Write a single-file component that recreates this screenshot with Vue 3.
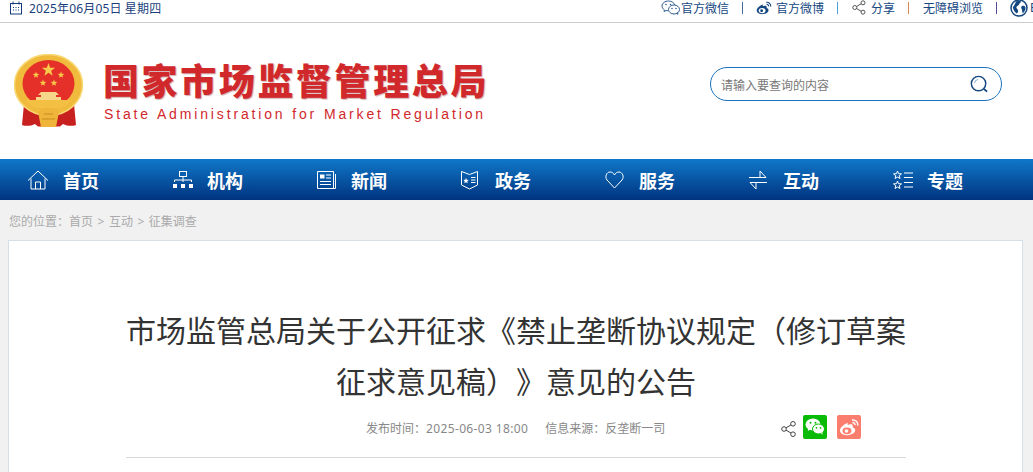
<script setup>
const topLinks = [
  { name: 'wechat', label: '官方微信' },
  { name: 'weibo', label: '官方微博' },
  { name: 'share', label: '分享' },
  { name: 'none', label: '无障碍浏览' },
]

const navItems = ['首页', '机构', '新闻', '政务', '服务', '互动', '专题']

// five-pointed star for the emblem
function star(cx, cy, r) {
  const pts = []
  for (let i = 0; i < 10; i++) {
    const a = -Math.PI / 2 + (i * Math.PI) / 5
    const d = i % 2 ? r * 0.4 : r
    pts.push((cx + d * Math.cos(a)).toFixed(2) + ',' + (cy + d * Math.sin(a)).toFixed(2))
  }
  return pts.join(' ')
}
</script>

<template>
  <div class="page">
    <div class="top">
      <div class="date">
        <svg class="cal" width="14" height="14" viewBox="0 0 14 14" fill="none" stroke="#14397c">
          <rect x="1.5" y="2.5" width="11" height="10.5" />
          <path d="M4 .5v3M10 .5v3" />
          <path d="M4 6.5h1M6.5 6.5h1M9 6.5h1M4 9h1M6.5 9h1M9 9h1" />
        </svg>
        <span>2025年06月05日 星期四</span>
      </div>
      <div class="links">
        <template v-for="(item, i) in topLinks" :key="item.label">
          <a class="link" :class="'link-' + item.name">
            <svg v-if="item.name === 'wechat'" width="20" height="15" viewBox="0 0 20 15" fill="none" stroke="#2f5f8f">
              <path d="M7.5 1C4 1 1 3.200 1 6c0 1.600 1 3 2.400 3.900L3 11.500l2-1c.6.200 1.300.3 2 .3" fill="#fff" />
              <path d="M7.500 1c3 0 5.600 1.600 6.300 3.900" />
              <ellipse cx="13" cy="9.500" rx="5.500" ry="4.500" fill="#fff" />
              <path d="M15.500 13.300l1.500 1-.3-1.900" />
              <circle cx="5" cy="4.500" r=".8" fill="#2f5f8f" stroke="none" />
              <circle cx="9.500" cy="4.500" r=".8" fill="#2f5f8f" stroke="none" />
              <circle cx="11" cy="8.500" r=".8" fill="#2f5f8f" stroke="none" />
              <circle cx="15" cy="8.500" r=".8" fill="#2f5f8f" stroke="none" />
            </svg>
            <svg v-else-if="item.name === 'weibo'" width="16" height="14" viewBox="0 0 17 14">
              <path d="M6.500 3.500C3.500 4.800 .5 7.300.8 9.800c.3 2.400 3.200 3.900 6.300 3.700 3.500-.2 6.200-2 6.200-4.200 0-1.300-1.100-2-2.100-2.300.5-1.400.2-2.400-1.300-2.500-1-.1-2 .3-2.700.6.300-1-.1-2-.7-1.600z" fill="#14477f" />
              <ellipse cx="6.500" cy="9.700" rx="3.600" ry="2.800" fill="#fff" />
              <circle cx="6" cy="9.900" r="1.500" fill="#14477f" />
              <path d="M11 1c2.800-.4 5 1.800 4.600 4.600M11.300 3.200c1.300-.2 2.300.8 2.100 2.100" fill="none" stroke="#14477f" stroke-width="1.200" />
            </svg>
            <svg v-else-if="item.name === 'share'" width="14" height="15" viewBox="0 0 14 15" fill="none" stroke="#555">
              <circle cx="2.800" cy="7.500" r="2" />
              <circle cx="11" cy="2.800" r="2" />
              <circle cx="11" cy="12.200" r="2" />
              <path d="M4.500 6.500l4.800-2.800M4.500 8.500l4.800 2.800" />
            </svg>
            <span>{{ item.label }}</span>
          </a>
          <i class="sep" :class="'sep' + i"></i>
        </template>
        <svg class="globe" width="18" height="18" viewBox="0 0 18 18">
          <circle cx="9" cy="9" r="8" fill="#fff" stroke="#14477f" stroke-width="1.500" />
          <path d="M6 2.500c2-1 4-.8 5 0-.3 1.500-1.500 1.500-2 3-.5 1.300-2 1-2.500 2.500-.5 1.200.8 1.800 1.500 3 .4 1-.3 3-1.200 3.500C4 12.500 3 10 2.800 8c1-.5 2.700-4 3.200-5.500zM12 7c1.500-.5 3.200 0 3.500 1.500.2 2-1 4.500-2.800 5.700-.7-1.500-.3-3-1-4.200C11 9 11 7.500 12 7z" fill="#14477f" />
        </svg>
        <span class="cut">E</span>
      </div>
    </div>

    <header class="head">
      <div class="brand">
        <svg class="emblem" width="70" height="74" viewBox="0 0 70 74">
          <!-- ribbons -->
          <path d="M10 50L8 71c4 1.500 9 1 13-1l3 2.500h22l3-2.500c4 2 9 2.500 13 1l-2-21z" fill="#c8201f" />
          <!-- ring -->
          <ellipse cx="34.500" cy="31" rx="34" ry="30.500" fill="#f0bb3c" />
          <ellipse cx="34.500" cy="31" rx="34" ry="30.500" fill="none" stroke="#f9d873" stroke-width="1.500" />
          <ellipse cx="34.500" cy="29.500" rx="26" ry="23.500" fill="#e5302a" />
          <polygon :points="star(34.500, 16, 7)" fill="#f6cb4a" />
          <polygon :points="star(22, 21, 3.500)" fill="#f6cb4a" />
          <polygon :points="star(47, 21, 3.500)" fill="#f6cb4a" />
          <polygon :points="star(29, 29, 3.500)" fill="#f6cb4a" />
          <polygon :points="star(40, 29, 3.500)" fill="#f6cb4a" />
          <!-- gate -->
          <path d="M27 38h15l3 3h-3v2h5v3H22v-3h5v-2h-3z" fill="#f6d78a" />
          <path d="M12 46h45c-3 4-6 6-10 8H22c-4-2-7-4-10-8z" fill="#f3c043" />
          <!-- flower knot -->
          <path d="M24 58c3-3 7-4 10.500-4s7.500 1 10.500 4l-3 15H27z" fill="#eeb53a" />
          <path d="M30 60h9M28 65h13" stroke="#c98a1c" fill="none" />
        </svg>
        <div class="brand-text">
          <div class="cn">国家市场监督管理总局</div>
          <div class="en">State Administration for Market Regulation</div>
        </div>
      </div>
      <div class="search">
        <span class="hint">请输入要查询的内容</span>
        <svg width="18" height="18" viewBox="0 0 20 20" fill="none" stroke="#14477f">
          <circle cx="9.500" cy="9.500" r="8" stroke-width="1.600" />
          <path d="M5 9a4.500 4.500 0 0 1 4-4" stroke="#7fa5c9" />
          <path d="M15.500 15.500l3.500 3" stroke-width="2" />
        </svg>
      </div>
    </header>

    <nav class="nav">
      <a v-for="(item, i) in navItems" :key="item" class="nav-item">
        <span class="nav-icon">
          <svg v-if="i === 0" width="22" height="20" viewBox="1 0 22 20" fill="none" stroke="#fff">
            <path d="M1 10.500L11 1l10 9.500M4 8.500V19h14V8.500M8.500 19v-7h5v7" />
          </svg>
          <svg v-else-if="i === 1" width="20" height="18" viewBox="0 0 20 18" fill="none" stroke="#fff">
            <rect x="6.500" y=".5" width="7" height="5" />
            <path d="M10 5.500V11M1.500 11V9h17v2" />
            <path d="M0 13h4v4H0zM8 13h4v4H8zM16 13h4v4h-4z" fill="#fff" stroke="none" />
          </svg>
          <svg v-else-if="i === 2" width="19" height="18" viewBox="0 0 19 18" fill="none" stroke="#fff">
            <path d="M.5.500h16v17H.5zM18.500 3v14.500H16" />
            <path d="M3 3.500h4.500v4H3z" fill="#fff" stroke="none" />
            <path d="M9 4h5M9 7h5M3 10.500h11M3 13.500h11" stroke-width="1.200" />
          </svg>
          <svg v-else-if="i === 3" width="17" height="20" viewBox="0 0 17 20" fill="none" stroke="#fff">
            <path d="M.5 1.500l8 3 8-3v13.500l-8 4-8-4z" />
            <path d="M5 8l.8 1.800 1.800.2-1.300 1.300.4 1.900L5 12.200l-1.700 1 .4-1.900L2.400 10l1.800-.2z" fill="#fff" stroke="none" />
            <path d="M10 7.500h4.500M10 10h4.500M10 12.500h4.500" />
          </svg>
          <svg v-else-if="i === 4" width="19" height="18" viewBox="0 0 19 18" fill="none" stroke="#fff">
            <path d="M9.500 17L2 9C-.5 6 1.500 1 5 1c2.200 0 3.600 1.200 4.500 3 .9-1.800 2.300-3 4.500-3 3.500 0 5.500 5 3 8z" />
          </svg>
          <svg v-else-if="i === 5" width="18" height="20" viewBox="0 0 18 20" fill="none" stroke="#fff">
            <path d="M0 7.500h17L11 1v6.500M18 12.500H1l6 6.500v-6.500" />
          </svg>
          <svg v-else width="20" height="20" viewBox="0 0 20 20" fill="none" stroke="#fff">
            <path d="M4.500 1l1 2.700 3 .2-2.300 1.800.8 2.800-2.500-1.500L2 8.500l.8-2.800L.5 3.900l3-.2zM4.500 11l1 2.700 3 .2-2.300 1.800.8 2.800-2.500-1.500L2 18.500l.8-2.800-2.300-1.800 3-.2z" />
            <path d="M11 3h9M11 7.500h9M11 12.500h9M11 17h9" />
          </svg>
        </span>
        <span class="nav-label">{{ item }}</span>
      </a>
    </nav>

    <main class="main">
      <div class="crumb">您的位置&#xFF1A;首页<span class="gt">&gt;</span>互动<span class="gt">&gt;</span>征集调查</div>
      <section class="card">
        <h1 class="title">市场监管总局关于公开征求《禁止垄断协议规定&#xFF08;修订草案征求意见稿&#xFF09;》意见的公告</h1>
        <div class="meta">
          <span class="time">发布时间&#xFF1A;<span class="num">2025-06-03 18:00</span></span>
          <span class="source">信息来源&#xFF1A;反垄断一司</span>
          <svg class="meta-share" width="15" height="16" viewBox="0 0 15 16" fill="none" stroke="#444">
            <circle cx="3" cy="8" r="2.300" />
            <circle cx="12" cy="2.800" r="2.300" />
            <circle cx="12" cy="13.200" r="2.300" />
            <path d="M5 6.900l5-3M5 9.100l5 3" />
          </svg>
          <span class="badge green">
            <svg width="20" height="18" viewBox="0 0 20 18">
              <ellipse cx="8" cy="6.500" rx="7.500" ry="6" fill="#fff" />
              <path d="M3.500 10l-.8 3 3.300-1.800z" fill="#fff" />
              <ellipse cx="13.500" cy="11" rx="6" ry="5" fill="#fff" stroke="#09bb07" />
              <path d="M16 15l1.500 2-.2-3z" fill="#fff" />
              <circle cx="5.500" cy="4.800" r="1" fill="#09bb07" />
              <circle cx="10.500" cy="4.800" r="1" fill="#09bb07" />
              <circle cx="11.500" cy="9.800" r=".9" fill="#09bb07" />
              <circle cx="15.500" cy="9.800" r=".9" fill="#09bb07" />
            </svg>
          </span>
          <span class="badge pink">
            <svg width="20" height="17" viewBox="0 0 20 17">
              <path d="M8 4.200C4.500 5.500.7 8.800 1 11.800c.3 2.900 3.800 4.700 7.600 4.400 4.300-.3 7.600-2.400 7.600-5.100 0-1.600-1.400-2.400-2.600-2.800.6-1.700.2-3-1.600-3.100-1.200-.1-2.400.4-3.300.8.300-1.300-.1-2.400-.7-1.800z" fill="#fff" />
              <ellipse cx="8" cy="11.800" rx="4.500" ry="3.400" fill="#fa7d6e" />
              <circle cx="7.500" cy="12" r="1.800" fill="#fff" />
              <path d="M13 1c3.600-.5 6.200 2.200 5.700 5.700M13.400 3.600c1.600-.2 2.800 1 2.600 2.600" fill="none" stroke="#fff" stroke-width="1.400" />
            </svg>
          </span>
        </div>
      </section>
    </main>
  </div>
</template>

<style scoped>
.page {
  height: 472px;
  overflow: hidden;
  background: #fff;
  font-family: "Noto Sans", "Noto Sans CJK SC", sans-serif;
}
.top {
  height: 22px;
  border-bottom: 1px solid #ccc;
  display: flex;
  overflow: hidden;
  font-size: 12px;
  color: #14477f;
}
.date {
  flex: none;
  width: 661px;
  padding-left: 9px;
  box-sizing: border-box;
  display: flex;
  align-items: center;
  gap: 6px;
  height: 15px;
  color: #1c3f7c;
  letter-spacing: .15px;
}
.links {
  flex: none;
  display: flex;
  align-items: center;
  height: 15px;
  white-space: nowrap;
}
.link {
  display: flex;
  align-items: center;
  gap: 4px;
}
.link-wechat { gap: 0; }
.link-share { gap: 5px; margin-left: 1px; }
.link-none { margin-left: 1px; }
.sep {
  width: 1px;
  height: 12px;
  margin: 0 13px;
  background: #4a6c9c;
}
.sep1 { background: #4aa0dc; }
.sep2 { background: #d98a50; }
.sep3 { background: #5a4a9c; }
.globe { flex: none; }
.cut { margin-left: 2px; }
.head {
  height: 136px;
  display: flex;
  justify-content: space-between;
  align-items: flex-start;
  padding: 0 31px 0 14px;
}
.brand {
  display: flex;
  align-items: flex-start;
  gap: 19px;
  margin-top: 31px;
}
.emblem { flex: none; }
.brand-text { margin-top: 8px; }
.cn {
  font-size: 36px;
  line-height: 40px;
  letter-spacing: 2.6px;
  font-weight: 900;
  color: #d1282c;
  text-shadow: 1px 1px 1px rgba(120, 30, 30, .35);
  white-space: nowrap;
}
.en {
  margin: 3px 0 0 1px;
  font-size: 14px;
  line-height: 18px;
  letter-spacing: 2.85px;
  color: #d1282c;
  font-family: "Liberation Sans", sans-serif;
  white-space: nowrap;
}
.search {
  width: 292px;
  height: 34px;
  border: 1px solid #1a74c0;
  border-radius: 17px;
  display: flex;
  align-items: center;
  justify-content: space-between;
  padding: 0 13px 0 10px;
  box-sizing: border-box;
  margin-top: 44px;
}
.hint {
  margin-top: 1px;
  font-size: 12px;
  color: #777;
}
.nav {
  height: 41px;
  padding-left: 28px;
  display: flex;
  background: linear-gradient(#1078c9, #00337f);
}
.nav-item {
  width: 144px;
  flex: none;
  display: flex;
  align-items: center;
  color: #fff;
}
.nav-icon {
  width: 35px;
  display: flex;
  align-items: center;
}
.nav-item + .nav-item svg { margin-left: 1px; }
.nav-label {
  font-size: 18px;
  font-weight: 700;
}
.main {
  height: 272px;
  background: #f1f1f1;
  padding: 0 10px 0 8px;
}
.crumb {
  height: 40px;
  line-height: 44px;
  padding-left: 1px;
  font-size: 12px;
  color: #aaa;
}
.gt { margin: 0 4.500px; }
.card {
  height: 300px;
  background: #fff;
  border: 1px solid #d5dfe9;
  padding: 64px 116px 0 117px;
}
.title {
  margin: 0;
  font-size: 30px;
  line-height: 51px;
  font-weight: 400;
  color: #333;
  text-align: center;
  text-spacing-trim: space-all;
}
.meta {
  height: 50px;
  border-bottom: 1px solid #d9d9d9;
  display: flex;
  align-items: flex-start;
  padding-left: 240px;
  font-size: 12px;
  color: #888;
}
.time, .source {
  line-height: 44px;
}
.num { letter-spacing: .36px; }
.source { margin-left: 17px; }
.meta-share {
  flex: none;
  margin: 14px 7px 0 116px;
}
.badge {
  flex: none;
  width: 24px;
  height: 24px;
  margin: 8px 10px 0 0;
  border-radius: 2px;
  display: flex;
  align-items: center;
  justify-content: center;
}
.green { background: #09bb07; }
.pink { background: #fa7d6e; }
</style>

<style>
html, body {
  margin: 0;
  overflow: hidden;
}
</style>
